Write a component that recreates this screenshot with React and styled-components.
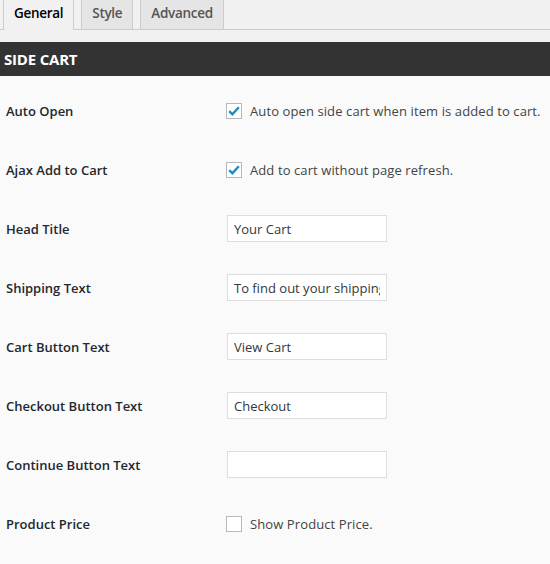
import React from 'react';
import styled, { createGlobalStyle } from 'styled-components';

const Global = createGlobalStyle`
  html, body {
    margin: 0;
    padding: 0;
    background: #f1f1f1;
    font-family: "Open Sans", "Noto Sans", sans-serif;
    color: #23282d;
  }
`;

const Tabs = styled.div`
  display: flex;
  align-items: flex-end;
  gap: 7px;
  height: 30px;
  padding-left: 3px;
  box-sizing: border-box;
  border-bottom: 1px solid #ccc;
`;

const Tab = styled.div`
  height: ${p => (p.$active ? '30px' : '29px')};
  box-sizing: border-box;
  padding: 0 10px 4px;
  display: flex;
  align-items: center;
  font-size: 13.5px;
  font-weight: 600;
  letter-spacing: -0.3px;
  color: ${p => (p.$active ? '#000' : '#555')};
  background: ${p => (p.$active ? '#f1f1f1' : '#e5e5e5')};
  border: 1px solid #ccc;
  border-top: none;
  border-bottom: none;
  margin-bottom: ${p => (p.$active ? '-1px' : '0')};
`;

const Header = styled.h2`
  margin: 12px 0 0;
  height: 34px;
  background: #333;
  color: #fff;
  font-size: 15px;
  font-weight: 700;
  display: flex;
  align-items: center;
  padding-left: 4px;
  letter-spacing: -0.2px;
`;

const Body = styled.div`
  background: #fafafa;
  padding-top: 21px;
  padding-bottom: 20px;
`;

const Row = styled.div`
  display: grid;
  grid-template-columns: 220px 1fr;
  align-items: center;
  align-content: start;
  height: 59px;
  padding-left: 6px;
  box-sizing: border-box;
`;

const Label = styled.div`
  font-size: 13px;
  font-weight: 600;
  color: #23282d;
  height: 27px;
  display: flex;
  align-items: center;
`;

const CheckWrap = styled.label`
  display: flex;
  align-items: center;
  gap: 8px;
  height: 27px;
  font-size: 13px;
  color: #444;
  letter-spacing: 0.1px;
`;

const Box = styled.span`
  width: 16px;
  height: 16px;
  box-sizing: border-box;
  border: 1px solid #b4b9be;
  background: #fff;
  display: flex;
  align-items: center;
  justify-content: center;
`;

const Input = styled.input`
  width: 160px;
  height: 27px;
  box-sizing: border-box;
  border: 1px solid #ddd;
  background: #fff;
  font-family: inherit;
  font-size: 13px;
  color: #32373c;
  padding: 0 6px;
  margin: 0 0 0 1px;
  outline: none;
`;

const Check = ({ checked, children }) => (
  <CheckWrap>
    <Box>
      {checked && (
        <svg width="14" height="14" viewBox="0 0 14 14">
          <path d="M2.2 7.2 L5.4 10.3 L11.8 3.2" fill="none" stroke="#1e8cbe" strokeWidth="2.4" />
        </svg>
      )}
    </Box>
    {children}
  </CheckWrap>
);

const rows = [
  { label: 'Auto Open', check: true, text: 'Auto open side cart when item is added to cart.' },
  { label: 'Ajax Add to Cart', check: true, text: 'Add to cart without page refresh.' },
  { label: 'Head Title', value: 'Your Cart' },
  { label: 'Shipping Text', value: 'To find out your shipping cost , Please proceed to checkout.' },
  { label: 'Cart Button Text', value: 'View Cart' },
  { label: 'Checkout Button Text', value: 'Checkout' },
  { label: 'Continue Button Text', value: '' },
  { label: 'Product Price', check: false, text: 'Show Product Price.' },
];

export default function App() {
  return (
    <>
      <Global />
      <Tabs>
        <Tab $active>General</Tab>
        <Tab>Style</Tab>
        <Tab>Advanced</Tab>
      </Tabs>
      <Header>SIDE CART</Header>
      <Body>
        {rows.map(r => (
          <Row key={r.label}>
            <Label>{r.label}</Label>
            {'value' in r ? (
              <Input type="text" readOnly value={r.value} />
            ) : (
              <Check checked={r.check}>{r.text}</Check>
            )}
          </Row>
        ))}
      </Body>
    </>
  );
}
